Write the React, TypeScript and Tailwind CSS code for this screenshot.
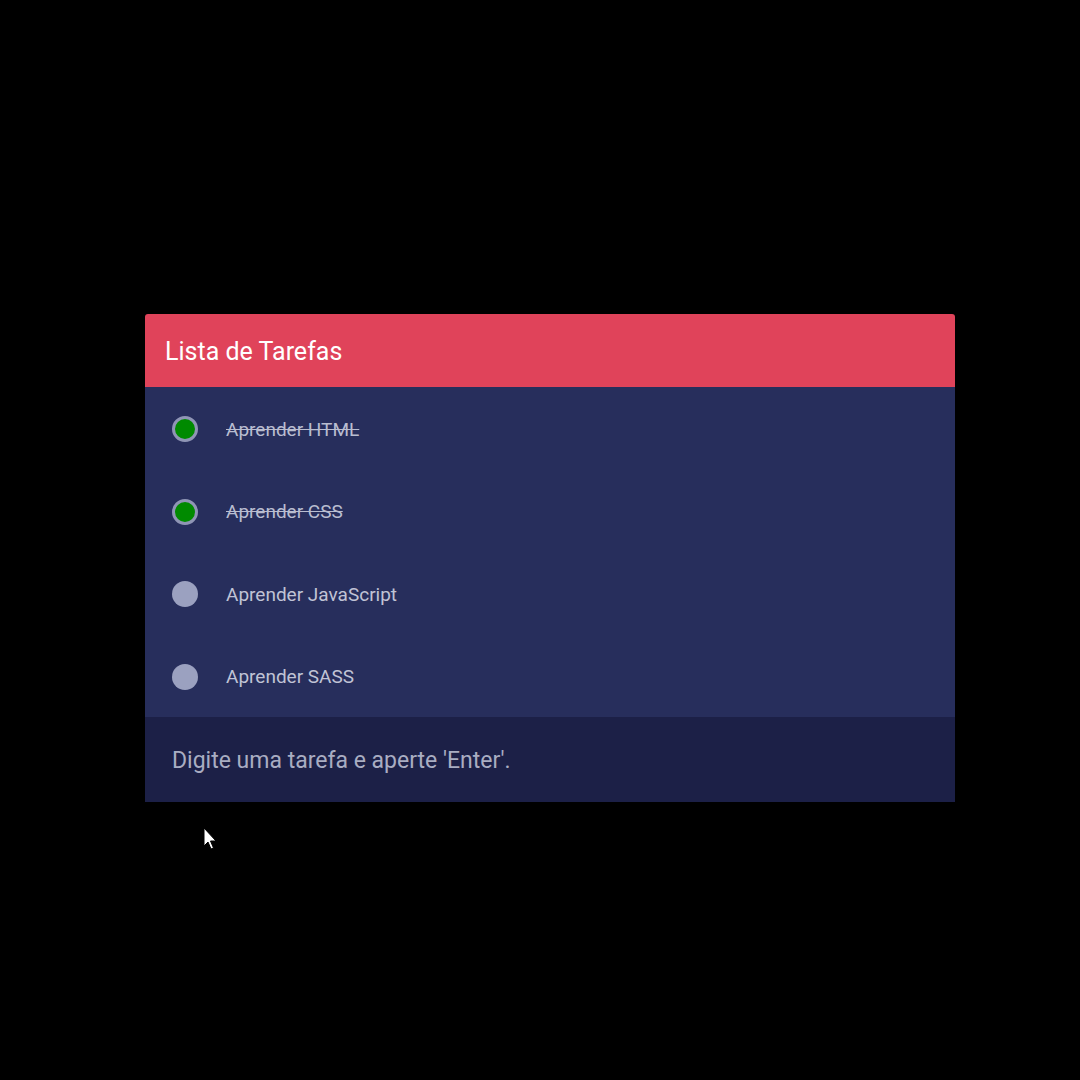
const tasks = [
  { label: 'Aprender HTML', done: true },
  { label: 'Aprender CSS', done: true },
  { label: 'Aprender JavaScript', done: false },
  { label: 'Aprender SASS', done: false },
]

export default function App() {
  return (
    <div className="relative min-h-[1080px] w-[1080px] bg-black pt-[314px] font-['Roboto',sans-serif]">
      <div className="ml-[145px] w-[810px] overflow-hidden rounded-t-[3px]">
        <header className="flex h-[73px] items-center bg-[#e0435a] px-5 pt-[2px]">
          <h1 className="text-[25px] text-white">Lista de Tarefas</h1>
        </header>

        <ul className="bg-[#272e5c]">
          {tasks.map((task) => (
            <li key={task.label} className="flex h-[82.5px] items-center gap-[28px] pl-[27px] pt-[2px]">
              {task.done ? (
                <span className="h-[26px] w-[26px] rounded-full border-[3px] border-[#8f95b5] bg-[#008a00]" />
              ) : (
                <span className="h-[26px] w-[26px] rounded-full bg-[#9ba1c0]" />
              )}
              <span
                className={
                  task.done
                    ? 'pt-[1px] text-[19px] text-[#b9bdd0] line-through decoration-[#b9bdd0]'
                    : 'pt-[1px] text-[19px] text-[#c0c3d5]'
                }
              >
                {task.label}
              </span>
            </li>
          ))}
        </ul>

        <footer className="flex h-[85px] items-center bg-[#1c2047] pl-[27px] pt-[3px]">
          <p className="text-[23px] text-[#a9adc2]">Digite uma tarefa e aperte 'Enter'.</p>
        </footer>
      </div>

      <svg
        className="absolute left-[203px] top-[827px]"
        width="16"
        height="24"
        viewBox="0 0 16 24"
        aria-hidden
      >
        <path d="M1 1 L1 19 L5 15 L8 22 L10.5 21 L7.5 14 L13 14 Z" fill="white" stroke="black" strokeWidth="1" />
      </svg>
    </div>
  )
}
